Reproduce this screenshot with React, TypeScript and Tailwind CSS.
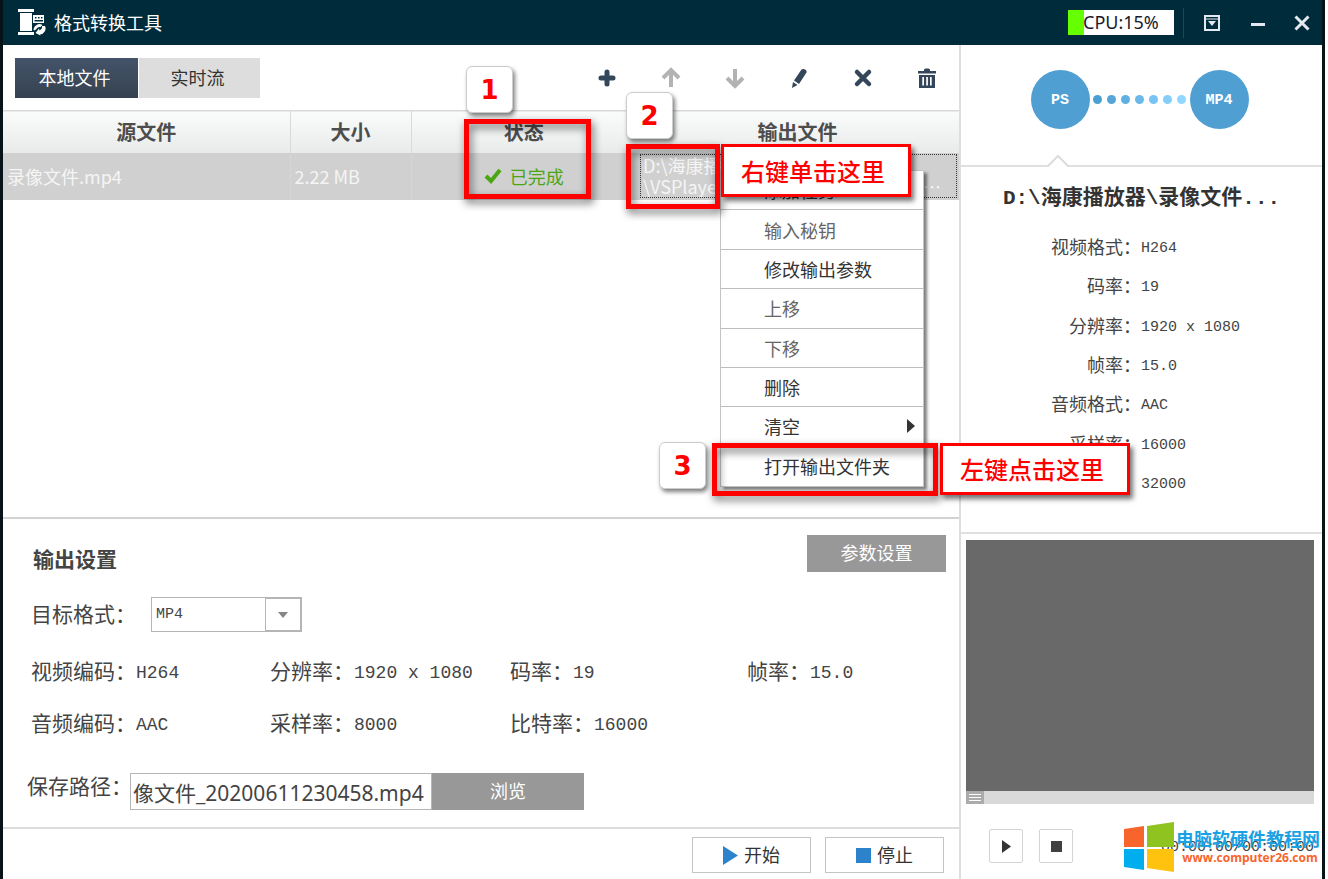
import type { ReactNode } from 'react';

const outputParams = [
  { label: '视频编码', value: 'H264' },
  { label: '分辨率', value: '1920 x 1080' },
  { label: '码率', value: '19' },
  { label: '帧率', value: '15.0' },
  { label: '音频编码', value: 'AAC' },
  { label: '采样率', value: '8000' },
  { label: '比特率', value: '16000' },
];

const sourceInfo = [
  { label: '视频格式', value: 'H264' },
  { label: '码率', value: '19' },
  { label: '分辨率', value: '1920 x 1080' },
  { label: '帧率', value: '15.0' },
  { label: '音频格式', value: 'AAC' },
  { label: '采样率', value: '16000' },
  { label: '比特率', value: '32000' },
];

const menuItems = [
  { label: '添加任务' },
  { label: '输入秘钥', disabled: true },
  { label: '修改输出参数' },
  { label: '上移', disabled: true },
  { label: '下移', disabled: true },
  { label: '删除' },
  { label: '清空', submenu: true },
  { label: '打开输出文件夹' },
];

const dotColors = [
  'bg-[#4a9fd3]',
  'bg-[#55a5d9]',
  'bg-[#5fafe2]',
  'bg-[#6bb8ea]',
  'bg-[#78c3f3]',
  'bg-[#86cefa]',
  'bg-[#92d7ff]',
];

const mono = "font-['Liberation_Mono','Noto_Sans_CJK_SC',monospace]";

function AppIcon() {
  return (
    <svg width="28" height="27" viewBox="0 0 28 27" fill="#fff">
      <rect x="0" y="0" width="16" height="3" />
      <rect x="2" y="4" width="12" height="18" />
      <rect x="0" y="23" width="16" height="3" />
      <path
        fillRule="evenodd"
        d="M15 6h11v8H15zM17 8v1.500h1.500V8zM20 8v1.500h1.500V8zM23 8v1.500h1.500V8zM16.500 11v1.500H25V11z"
      />
      <path d="M15.500 20a6 6 0 0 1 9-4l-2 2a4 4 0 0 0-4.500 2.500l-2 1z" />
      <path d="M27 17a6 6 0 0 1-5 8.500l.5 1-5-2.500 3.500-4.500.5 2A4 4 0 0 0 24 17z" />
    </svg>
  );
}

function ToolButton({ label, disabled, children }: { label: string; disabled?: boolean; children: ReactNode }) {
  return (
    <button
      type="button"
      aria-label={label}
      disabled={disabled}
      className="flex size-6 items-center justify-center text-[#34465a] disabled:text-[#b3b3b3]"
    >
      <svg width="22" height="22" viewBox="0 0 22 22" fill="none" stroke="currentColor">
        {children}
      </svg>
    </button>
  );
}

function TitleBar() {
  return (
    <header className="flex h-[45px] items-center bg-[#002b3b] pl-[15px] text-white">
      <AppIcon />
      <h1 className="ml-2 flex-1 pb-0.5 text-lg leading-6">格式转换工具</h1>
      <div className="flex h-[25px] w-[106px] bg-white">
        <div className="w-4 bg-[#66ff00]" />
        <span className="-ml-px font-['Noto_Sans',sans-serif] text-lg leading-[25px] text-[#1a1a2a]">CPU:15%</span>
      </div>
      <div className="ml-[9px] h-[30px] w-px bg-[#1d4658]" />
      <button type="button" aria-label="主菜单" className="ml-4 flex size-6 items-center justify-center">
        <svg width="16" height="16" viewBox="0 0 16 16" fill="none" stroke="#e4e8f0" strokeWidth="2">
          <rect x="1" y="1" width="14" height="14" />
          <path d="M2 4h12" strokeWidth="1" />
          <path d="M4 6h8l-4 5z" fill="#e4e8f0" stroke="none" />
        </svg>
      </button>
      <button type="button" aria-label="最小化" className="ml-[22px] flex size-6 items-center justify-center">
        <span className="mt-1 h-[3px] w-3.5 bg-[#e4e8f0]" />
      </button>
      <button type="button" aria-label="关闭" className="mr-2 ml-5 flex size-6 items-center justify-center">
        <svg width="16" height="16" viewBox="0 0 16 16" stroke="#e4e8f0" strokeWidth="3">
          <path d="M1.500 1.500l13 13M14.500 1.500l-13 13" />
        </svg>
      </button>
    </header>
  );
}

function Toolbar() {
  return (
    <div className="flex h-[65px] items-center pr-5 pl-3">
      <div className="flex flex-1 gap-px">
        <button
          type="button"
          className="h-10 w-[123px] bg-gradient-to-b from-[#43536a] to-[#36424f] pr-1 pb-0.5 text-lg leading-6 text-white"
        >
          本地文件
        </button>
        <button type="button" className="h-10 w-[121px] bg-[#dddddd] pr-1 pb-0.5 text-lg leading-6 text-[#333]">
          实时流
        </button>
      </div>
      <div className="flex gap-10">
        <ToolButton label="添加">
          <path d="M11 5v12M5 11h12" strokeWidth="5" strokeLinecap="round" />
        </ToolButton>
        <ToolButton label="上移" disabled>
          <path d="M11 20V4M3 11l8-8 8 8" strokeWidth="4" />
        </ToolButton>
        <ToolButton label="下移" disabled>
          <path d="M11 2v16M3 11l8 8 8-8" strokeWidth="4" />
        </ToolButton>
        <ToolButton label="编辑">
          <path
            d="M13.500 2.500c1.500-1.500 6 .5 5 3l-7.500 11.500-5-3.500zM5 15l4.500 3L4 21z"
            fill="currentColor"
            stroke="none"
          />
        </ToolButton>
        <ToolButton label="删除">
          <path d="M5 5l12 12M17 5L5 17" strokeWidth="4.500" strokeLinecap="round" />
        </ToolButton>
        <ToolButton label="清空">
          <path
            d="M8 2.500C8 1 14 1 14 2.500V4h6v2.500H2V4h6zM3 8h16v13H3zM6.300 10v8.500h1.700V10zM10.200 10v8.500h1.700V10zM14 10v8.500h1.700V10z"
            fill="currentColor"
            fillRule="evenodd"
            stroke="none"
          />
        </ToolButton>
      </div>
    </div>
  );
}

function FileTable() {
  return (
    <table className="w-full table-fixed border-collapse text-lg leading-6">
      <colgroup>
        <col className="w-[287px]" />
        <col className="w-[121px]" />
        <col className="w-[225px]" />
        <col />
      </colgroup>
      <thead>
        <tr className="h-[42px] border-t border-[#d9d9d9] bg-gradient-to-b from-[#fafbfb] to-[#e9ebeb] text-xl leading-6 text-[#4d4d4d]">
          <th className="border-r border-[#d9d9d9]">源文件</th>
          <th className="border-r border-[#d9d9d9]">大小</th>
          <th>状态</th>
          <th>输出文件</th>
        </tr>
      </thead>
      <tbody>
        <tr className="h-[47px] bg-[#d0d0d0] text-[#f5f5f5]">
          <td className="border-r border-[#d6d6d6] pl-1">录像文件.mp4</td>
          <td className="border-r border-[#d6d6d6] pl-1">2.22 MB</td>
          <td>
            <div className="flex items-center justify-center gap-2 text-[#4ba614]">
              <svg width="18" height="16" viewBox="0 0 18 16" fill="none" stroke="currentColor" strokeWidth="4">
                <path d="M2 8l5 5L16 2" />
              </svg>
              已完成
            </div>
          </td>
          <td className="pr-0.5 pl-1">
            <div className="truncate border border-dotted border-[#333] pr-2 pl-0.5 text-lg leading-[21px]">
              D:\海康播放器
              <br />
              \VSPlayer\录像文件_20200611230458.mp4 文件...
            </div>
          </td>
        </tr>
      </tbody>
    </table>
  );
}

function OutputSettings() {
  return (
    <section className="border-t-2 border-[#d2d2d2] pt-4 pb-[17px] pl-7 text-[#444]">
      <div className="flex h-[37px] items-center justify-between pr-[13px]">
        <h2 className="pt-2 pl-0.5 text-[21px] leading-6 font-bold">输出设置</h2>
        <button type="button" className="h-[37px] w-[139px] bg-[#989898] pb-1 text-lg leading-6 text-white">
          参数设置
        </button>
      </div>
      <div className="mt-[25px] flex h-[35px] items-center">
        <label htmlFor="format" className="w-[120px] pb-1 text-[21px] leading-6">
          目标格式：
        </label>
        <div className="relative h-full w-[151px] border border-[#b5b5b5]">
          <select id="format" className={`h-full w-full appearance-none bg-white pt-0.5 pl-1 text-[15px] ${mono}`}>
            <option>MP4</option>
          </select>
          <span className="pointer-events-none absolute inset-y-0 right-0 flex w-9 items-center justify-center border border-[#b5b5b5]">
            <svg width="10" height="6" viewBox="0 0 10 6" fill="#858585">
              <path d="M0 0h10L5 6z" />
            </svg>
          </span>
        </div>
      </div>
      <dl className="mt-3.5 grid grid-cols-[239px_240px_237px_1fr]">
        {outputParams.map((p) => (
          <div key={p.label} className="flex h-[52px] items-center">
            <dt className="pb-1 text-[21px] leading-6">{p.label}：</dt>
            <dd className={`pt-0.5 text-lg leading-6 ${mono}`}>{p.value}</dd>
          </div>
        ))}
      </dl>
      <div className="mt-[23px] -ml-1 flex h-[37px]">
        <label htmlFor="path" className="w-[103px] text-[21px] leading-6 whitespace-nowrap">
          保存路径：
        </label>
        <input
          id="path"
          readOnly
          value="像文件_20200611230458.mp4"
          className="h-full w-[302px] border border-[#b5b5b5] px-0.5 font-['Noto_Sans','Noto_Sans_CJK_SC',sans-serif] text-[21px]"
        />
        <button type="button" className="h-full w-[152px] bg-[#989898] pb-1 text-lg leading-6 text-white">
          浏览
        </button>
      </div>
    </section>
  );
}

function ActionBar() {
  return (
    <div className="flex h-[52px] items-start justify-end gap-3.5 border-t-2 border-[#dcdcdc] pt-2 pr-[15px] text-lg leading-6 text-[#333]">
      <button type="button" className="flex h-9 w-[119px] items-center justify-center gap-1.5 border border-[#c4c4c4]">
        <svg width="15" height="19" viewBox="0 0 15 19" fill="#2d82cc">
          <path d="M0 0l15 9.500L0 19z" />
        </svg>
        <span className="pb-0.5">开始</span>
      </button>
      <button type="button" className="flex h-9 w-[119px] items-center justify-center gap-1.5 border border-[#c4c4c4]">
        <span className="size-[15px] bg-[#2d82cc]" />
        <span className="pb-0.5">停止</span>
      </button>
    </div>
  );
}

function ConversionFlow() {
  return (
    <div>
      <div className={`flex h-[109px] items-center justify-center pr-1 text-[15px] font-bold text-white ${mono}`}>
        <span className="flex size-[59px] items-center justify-center rounded-full bg-[#509fd3] pt-1">PS</span>
        <div className="flex w-[100px] justify-center gap-[5px]">
          {dotColors.map((color) => (
            <span key={color} className={`size-[9px] rounded-full ${color}`} />
          ))}
        </div>
        <span className="flex size-[59px] items-center justify-center rounded-full bg-[#509fd3] pt-1">MP4</span>
      </div>
      <div className="flex items-end">
        <div className="h-0.5 w-[86px] bg-[#e0e0e0]" />
        <svg width="22" height="13" viewBox="0 0 22 13" fill="none" stroke="#dcdcdc" strokeWidth="2">
          <path d="M0 12h1L11 2l10 10h1" />
        </svg>
        <div className="h-0.5 flex-1 bg-[#e0e0e0]" />
      </div>
    </div>
  );
}

function SidePanel() {
  return (
    <aside className="flex w-[363px] shrink-0 flex-col border-l-2 border-[#dedede]">
      <ConversionFlow />
      <h2 className={`mt-5 text-center text-[21px] leading-6 font-bold text-[#333] ${mono}`}>
        D:\海康播放器\录像文件...
      </h2>
      <dl className="mt-[17px] grid h-[276px] auto-rows-fr text-[#444]">
        {sourceInfo.map((row) => (
          <div key={row.label} className="flex items-center">
            <dt className="w-[180px] pb-1 text-right text-lg leading-6">{row.label}：</dt>
            <dd className={`pt-0.5 text-[15px] leading-6 ${mono}`}>{row.value}</dd>
          </div>
        ))}
      </dl>
      <div className="mt-7 flex flex-1 flex-col border-t-2 border-[#e0e0e0] pt-1.5 pr-2 pl-[5px]">
        <div className="min-h-[251px] flex-1 bg-[#696969]" />
        <div className="flex h-[13px] bg-[#d9d9d9]">
          <div className="flex w-[18px] flex-col items-center justify-center gap-0.5 bg-[#ababab]">
            <span className="h-px w-3 bg-white" />
            <span className="h-px w-3 bg-white" />
            <span className="h-px w-3 bg-white" />
          </div>
        </div>
        <div className="flex h-[75px] items-center gap-4 pt-[13px] pb-1 pl-[23px]">
          <button
            type="button"
            aria-label="播放"
            className="flex size-[34px] items-center justify-center rounded-xs border border-[#d4d4d4]"
          >
            <svg width="9" height="13" viewBox="0 0 9 13" fill="#333">
              <path d="M0 0l9 6.500L0 13z" />
            </svg>
          </button>
          <button
            type="button"
            aria-label="停止播放"
            className="flex size-[34px] items-center justify-center rounded-xs border border-[#d4d4d4]"
          >
            <span className="size-[11px] bg-[#404040]" />
          </button>
          <span className={`ml-auto pt-1 text-[15px] text-[#444] ${mono}`}>00:00:00/00:00:00</span>
        </div>
      </div>
    </aside>
  );
}

function ContextMenu() {
  return (
    <div
      role="menu"
      className="absolute top-[170px] left-[720px] grid h-[317px] w-[204px] auto-rows-fr border border-[#c4c4c4] bg-white text-lg leading-6 text-[#333] shadow-[3px_3px_3px_rgba(0,0,0,0.5)]"
    >
      {menuItems.map((item) => (
        <button
          key={item.label}
          type="button"
          role="menuitem"
          disabled={item.disabled}
          className="flex items-center justify-between border-b border-[#bdbdbd] pr-2 pl-[43px] last:border-b-0 disabled:text-[#666]"
        >
          {item.label}
          {item.submenu && (
            <svg width="8" height="14" viewBox="0 0 8 14" fill="#333">
              <path d="M0 0l8 7-8 7z" />
            </svg>
          )}
        </button>
      ))}
    </div>
  );
}

function StepBadge({ step, className }: { step: number; className: string }) {
  return (
    <span
      className={`absolute flex size-[47px] items-center justify-center rounded-md border border-[#ccc] bg-white pt-0.5 font-['DejaVu_Sans',sans-serif] text-[26px] font-bold text-[#f00] shadow-[2px_3px_4px_rgba(0,0,0,0.5)] ${className}`}
    >
      {step}
    </span>
  );
}

function Frame({ className }: { className: string }) {
  return (
    <div
      className={`pointer-events-none absolute border-[5px] border-[#f00] drop-shadow-[2px_4px_4px_rgba(0,0,0,0.6)] ${className}`}
    />
  );
}

function Callout({ className, children }: { className: string; children: ReactNode }) {
  return (
    <p
      className={`absolute flex w-[190px] items-center border-[3px] border-[#f00] bg-white text-2xl leading-8 font-medium text-[#f00] shadow-[3px_4px_5px_rgba(0,0,0,0.55)] ${className}`}
    >
      {children}
    </p>
  );
}

function Guide() {
  return (
    <>
      <Frame className="top-[119px] left-[464px] h-[80px] w-[127px]" />
      <Frame className="top-[144px] left-[626px] h-[65px] w-[94px]" />
      <Frame className="top-[443px] left-[712px] h-[53px] w-[226px]" />
      <Callout className="top-[144px] left-[721px] h-[53px] pl-[17px]">右键单击这里</Callout>
      <Callout className="top-[443px] left-[940px] h-[52px] pl-[17px]">左键点击这里</Callout>
      <StepBadge step={1} className="top-[66px] left-[466px]" />
      <StepBadge step={2} className="top-[92px] left-[626px]" />
      <StepBadge step={3} className="top-[442px] left-[659px]" />
    </>
  );
}

function SiteBadge() {
  return (
    <a href="#" className="absolute right-2 bottom-[7px] flex items-center gap-0.5">
      <svg width="50" height="50" viewBox="0 0 50 50">
        <path d="M0 7l20-3v21H0z" fill="#f8652c" />
        <path d="M23 4l27-4v25H23z" fill="#8fc31f" />
        <path d="M0 27h20v21L0 45z" fill="#00aeef" />
        <path d="M23 27h27v23l-27-4z" fill="#ffc20e" />
      </svg>
      <span className="flex flex-col items-center pb-0.5 font-bold">
        <span className="text-lg leading-6 text-[#1ba1e2]">电脑软硬件教程网</span>
        <span className="pl-1 font-['Open_Sans',sans-serif] text-xs leading-4 text-[#f8652c]">www.computer26.com</span>
      </span>
    </a>
  );
}

export default function App() {
  return (
    <div className="relative bg-white pr-[3px] font-['Noto_Sans_CJK_SC',sans-serif]">
      <div className="flex min-h-screen flex-col border-r-[3px] border-l-[3px] border-[#06141a]">
        <TitleBar />
        <div className="flex flex-1">
          <main className="flex min-w-0 flex-1 flex-col">
            <Toolbar />
            <div className="min-h-[406px] flex-1">
              <FileTable />
            </div>
            <OutputSettings />
            <ActionBar />
          </main>
          <SidePanel />
        </div>
      </div>
      <ContextMenu />
      <Guide />
      <SiteBadge />
    </div>
  );
}
